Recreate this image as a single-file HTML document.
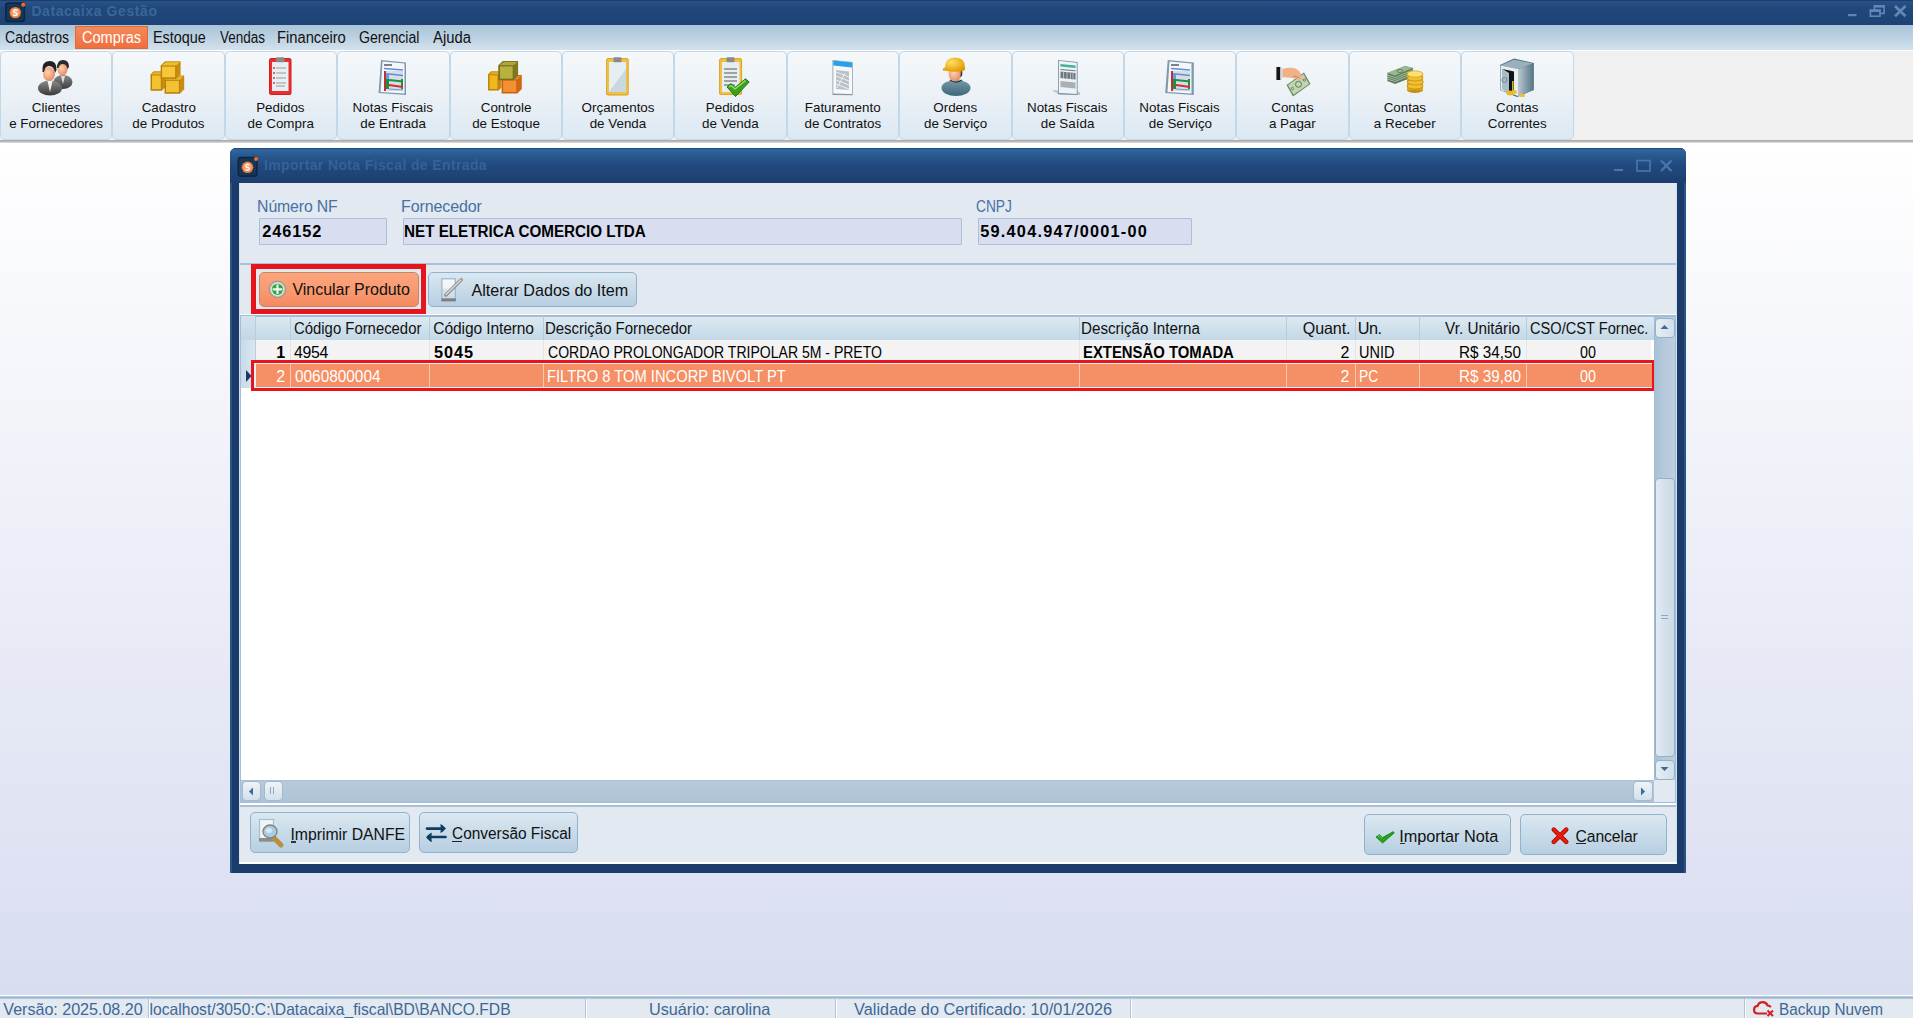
<!DOCTYPE html>
<html><head><meta charset="utf-8"><title>Datacaixa Gestão</title><style>
*{box-sizing:border-box}
html,body{margin:0;padding:0}
body{width:1913px;height:1018px;overflow:hidden;position:relative;font-family:"Liberation Sans",sans-serif;background:#fff}
.t{position:absolute;white-space:nowrap;line-height:20px;font-family:"Liberation Sans",sans-serif}
.a{position:absolute}
#title{left:0;top:0;width:1913px;height:25px;background:linear-gradient(#1d3d68 0,#1d3d68 1px,#2a5288 1px,#27508a 3px,#204879 8px,#1f4679 60%,#1d4376)}
#menu{left:0;top:25px;width:1913px;height:25px;background:linear-gradient(#abc4d9,#bcd1e2 50%,#d3e1ec)}
#compras{left:75px;top:25.5px;width:72.5px;height:23px;background:linear-gradient(#f5895a,#ee6f3f);border:1px solid #e06a38}
#ribbon{left:0;top:50px;width:1913px;height:90px;background:#f0f0f0;border-top:1px solid #fff}
.rb{position:absolute;top:51px;width:112.4px;height:88.5px;border:1px solid #c2d8e8;border-width:1px 1.2px;border-radius:5px;background:linear-gradient(#f5f8fa,#ebf1f6 50%,#dce8f2)}
.ic{position:absolute;top:57px}
#rline{left:0;top:140px;width:1913px;height:3px;background:linear-gradient(#a4a4a4,#bcbcbc 50%,#e4e4e4)}
#main{left:0;top:143px;width:1913px;height:852px;background:linear-gradient(#ffffff,#d8ddf0)}
#dlg{left:230px;top:148px;width:1456px;height:725px;background:#1b3c6b;border-radius:6px 6px 1px 1px;box-shadow:inset 2px 0 0 #285486,inset -2px 0 0 #285486}
#dtitle{left:230px;top:148px;width:1456px;height:35px;border-radius:6px 6px 0 0;background:linear-gradient(#1d3f6c,#3068a0 5%,#2a5b91 18%,#22497e 50%,#1c3e6e)}
#dcont{left:239px;top:183px;width:1438px;height:681px;background:#e2e9f1;border-left:1px solid #d0e0ec;border-right:1px solid #d0e0ec;border-bottom:2px solid #fff}
.edit{position:absolute;background:#d8deef;border:1px solid #a8c1d8;border-radius:1px}
.sep{position:absolute;height:2px;background:#a9c1d7}
.btn{position:absolute;border:1px solid #8fb2cf;border-radius:5px;background:linear-gradient(#dbe8f1,#c8dbe9 50%,#b7cfe2)}
#grid{left:240px;top:315px;width:1436px;height:488px;background:#fff;border:1px solid #a3bed4;border-top-width:2px}
#ghead{left:241px;top:317px;width:1413px;height:23px;background:linear-gradient(#dde9f2,#cddfeb 60%,#c3d7e6)}
#gind{left:241px;top:340px;width:15px;height:48px;background:linear-gradient(90deg,#c8dbe8,#dbe7f0)}
.vl{position:absolute;width:1px}
#vsb{left:1654px;top:317px;width:21px;height:463px;background:linear-gradient(90deg,#a9c1d6,#b6cadb 50%,#bccfdf);border-left:1px solid #a3bcd2}
.sbb{position:absolute;border:1px solid #9fbad2;border-radius:4px;background:linear-gradient(#eef3f7,#d3e1ec)}
#hsb{left:241px;top:780px;width:1413px;height:22px;background:linear-gradient(#b7cadb,#adc3d6);border-top:1px solid #a9c1d6}
#corner{left:1654px;top:780px;width:21px;height:22px;background:#e2e9f1}
#status{left:0;top:995px;width:1913px;height:23px;background:#e2e9f1;border-top:1px solid #fff}
#sline{left:0;top:996px;width:1913px;height:3px;background:linear-gradient(#b8cde0,#a0bad3 50%,#b8cde0)}
.sdiv{position:absolute;top:999px;width:2px;height:19px;border-left:1px solid #b0c4d6;border-right:1px solid #fff}
.red{position:absolute;border:5px solid #e8141c}
</style></head><body>
<div class="a" id="title"></div>
<svg class="a" style="left:4px;top:0px" width="24" height="24" viewBox="0 0 24 24">
<rect x="1.8" y="3" width="18.6" height="18.4" rx="2.5" fill="#163658" stroke="#0c2742" stroke-width="1.6"/>
<circle cx="11.3" cy="12.6" r="5.7" fill="#f07d3c"/><circle cx="11.3" cy="12.6" r="4" fill="#ffc8a0" opacity="0.5"/><path d="M13.3 10.3 Q11.5 9 9.8 10.3 Q9.2 12 11.3 12.6 Q13.4 13.2 12.8 14.9 Q11 16.2 9.2 14.8" fill="none" stroke="#fff4ea" stroke-width="1.5"/>
<circle cx="19.2" cy="4.8" r="2" fill="#ff6a18"/></svg>
<svg class="a" style="left:1845px;top:3px" width="64" height="16" viewBox="0 0 64 16">
<rect x="3" y="11" width="8.5" height="2.2" fill="#5a84b2"/>
<rect x="29.5" y="2.8" width="9.6" height="7.6" fill="none" stroke="#5f88b5" stroke-width="1.6"/><rect x="28.7" y="2" width="11.2" height="2.6" fill="#5f88b5"/>
<rect x="25.4" y="7.2" width="9.6" height="6" fill="#1f4578" stroke="#5f88b5" stroke-width="1.6"/><rect x="24.6" y="6.4" width="11.2" height="2.6" fill="#5f88b5"/>
<path d="M50 3 L60.5 13.2 M60.5 3 L50 13.2" stroke="#5f88b5" stroke-width="2.8"/></svg>
<div class="a" id="menu"></div>
<div class="a" id="compras"></div>
<div class="a" id="ribbon"></div>
<div class="rb" style="left:0.0px"></div>
<svg class="ic" style="left:36.2px" width="40" height="40" viewBox="0 0 40 40">
<defs><radialGradient id="face" cx="0.4" cy="0.4" r="0.7"><stop offset="0" stop-color="#ffd2b0"/><stop offset="1" stop-color="#e0845a"/></radialGradient>
<linearGradient id="suit" x1="0" y1="0" x2="0" y2="1"><stop offset="0" stop-color="#8a8a8a"/><stop offset="1" stop-color="#3a3a3a"/></linearGradient></defs>
<ellipse cx="27" cy="25" rx="9.5" ry="7" fill="url(#suit)"/>
<path d="M25 19 l2 8 l2 -8z" fill="#ddd"/>
<ellipse cx="26.5" cy="12.5" rx="5" ry="6" fill="url(#face)"/>
<path d="M21 11 q0 -8 6 -8 q6 0 6 7 l-1.5 2 q-1 -5 -5 -5 q-3 0 -4 4z" fill="#2a2a2a"/>
<ellipse cx="14" cy="31" rx="12" ry="7.5" fill="url(#suit)"/>
<path d="M11.5 24 l2.5 11 l2.5 -11z" fill="#f2f2f2"/>
<ellipse cx="13" cy="17" rx="6" ry="7" fill="url(#face)"/>
<path d="M6.5 15 q-1 -11 7 -11 q7.5 0 7 9 l-1.5 3 q-1 -7 -6 -7 q-4 0 -5 6z" fill="#222"/>
</svg>
<div class="rb" style="left:112.4px"></div>
<svg class="ic" style="left:148.6px" width="40" height="40" viewBox="0 0 40 40"><path d="M1.5 17.490000000000002 L4.6899999999999995 14.3 L16.0 14.3 L16.0 30.51 L12.81 33.7 L1.5 33.7z" fill="#c88c10"/><rect x="2.5" y="17.990000000000002" width="9.81" height="14.709999999999997" fill="#f2c233" stroke="#b87e0a" stroke-width="1"/><path d="M2.5 17.490000000000002 L5.6899999999999995 15.3 L15.0 15.3 L12.81 17.490000000000002z" fill="#f2c233" opacity="0.8"/><path d="M15.5 22.733999999999998 L19.834 18.4 L35.2 18.4 L35.2 32.366 L30.866000000000003 36.7 L15.5 36.7z" fill="#c88c10"/><rect x="16.5" y="23.233999999999998" width="13.866" height="12.466000000000001" fill="#f2c233" stroke="#b87e0a" stroke-width="1"/><path d="M16.5 22.733999999999998 L20.834 19.4 L34.2 19.4 L30.866000000000003 22.733999999999998z" fill="#f2c233" opacity="0.8"/><path d="M11.6 8.600000000000001 L16.0 4.2 L31.6 4.2 L31.6 17.5 L27.200000000000003 21.9 L11.6 21.9z" fill="#c88c10"/><rect x="12.6" y="9.100000000000001" width="14.1" height="11.799999999999999" fill="#f5c83a" stroke="#b87e0a" stroke-width="1"/><path d="M12.6 8.600000000000001 L17.0 5.2 L30.6 5.2 L27.200000000000003 8.600000000000001z" fill="#f5c83a" opacity="0.8"/></svg>
<div class="rb" style="left:224.8px"></div>
<svg class="ic" style="left:261.0px" width="40" height="40" viewBox="0 0 40 40">
<rect x="8" y="1" width="22.5" height="37" rx="2.5" fill="#d41c1c"/>
<rect x="9" y="2" width="20.5" height="35" rx="2" fill="#e83030"/>
<rect x="11" y="5" width="16.5" height="29" fill="#e8eef2"/>
<rect x="15" y="0.3" width="8.5" height="5" rx="1" fill="#8a8a8a"/>
<circle cx="13" cy="11" r="0.9" fill="#d22"/><circle cx="13" cy="16" r="0.9" fill="#d22"/><circle cx="13" cy="21" r="0.9" fill="#d22"/><circle cx="13" cy="26" r="0.9" fill="#d22"/>
<path d="M15 11h10M15 16h10M15 21h10M15 26h10M15 29h9" stroke="#999" stroke-width="1.2"/>
</svg>
<div class="rb" style="left:337.2px"></div>
<svg class="ic" style="left:373.4px" width="40" height="40" viewBox="0 0 40 40">
<path d="M5.5 36 L8 3 L33 5.5 L33 38z" fill="#7f98ac"/>
<path d="M7.5 35 L9.5 4.5 L31.5 6.5 L31.5 36.5z" fill="#f4f6f8"/>
<path d="M11 8 h8" stroke="#333" stroke-width="1.2"/>
<path d="M11 11.5 L30 13" stroke="#5b8ee0" stroke-width="1.5"/>
<rect x="11" y="14" width="19" height="20" fill="#d8dde4"/>
<rect x="11" y="14" width="2" height="20" fill="#c03030"/>
<rect x="13" y="16" width="3" height="6" fill="#6a9ae6"/>
<rect x="13" y="22" width="3" height="10" fill="#1e9040"/>
<path d="M16 17 L30 18.5" stroke="#5b8ee0" stroke-width="1.5"/>
<path d="M16 23 L30 24.5" stroke="#1e9040" stroke-width="2"/>
<rect x="28" y="22" width="2" height="10" fill="#1e9040"/>
<path d="M16 28 L30 30" stroke="#d03030" stroke-width="2"/>
<path d="M16 32 L30 33" stroke="#6a9ae6" stroke-width="1.2"/>
</svg>
<div class="rb" style="left:449.6px"></div>
<svg class="ic" style="left:485.8px" width="40" height="40" viewBox="0 0 40 40"><path d="M2 17.27 L4.970000000000001 14.3 L15.5 14.3 L15.5 30.630000000000003 L12.53 33.6 L2 33.6z" fill="#c88a10"/><rect x="3" y="17.77" width="9.03" height="14.830000000000002" fill="#f0b820" stroke="#b8800a" stroke-width="1"/><path d="M3 17.27 L5.970000000000001 15.3 L14.5 15.3 L12.53 17.27z" fill="#f0b820" opacity="0.8"/><path d="M15.6 22.444 L20.044 18 L35.8 18 L35.8 31.956 L31.355999999999998 36.4 L15.6 36.4z" fill="#d06810"/><rect x="16.6" y="22.944" width="14.256" height="12.456" fill="#f59030" stroke="#c06010" stroke-width="1"/><path d="M16.6 22.444 L21.044 19 L34.8 19 L31.355999999999998 22.444z" fill="#f59030" opacity="0.8"/><path d="M12.3 8.356 L16.656 4 L32.1 4 L32.1 18.844 L27.744 23.2 L12.3 23.2z" fill="#807820"/><rect x="13.3" y="8.856" width="13.944" height="13.344" fill="#b8b040" stroke="#6e6818" stroke-width="1"/><path d="M13.3 8.356 L17.656 5 L31.1 5 L27.744 8.356z" fill="#b8b040" opacity="0.8"/></svg>
<div class="rb" style="left:562.0px"></div>
<svg class="ic" style="left:598.2px" width="40" height="40" viewBox="0 0 40 40">
<rect x="8.1" y="1" width="22.6" height="37.5" rx="2.5" fill="#d8a020"/>
<rect x="9" y="1.8" width="20.8" height="35.8" rx="2" fill="#f0c040"/>
<rect x="11" y="5" width="17" height="30" fill="#e6eef2"/>
<path d="M11 35 L28 12 L28 35z" fill="#c8d8e0"/>
<rect x="15.5" y="0.3" width="8" height="5" rx="1" fill="#8a8a8a"/>
</svg>
<div class="rb" style="left:674.4px"></div>
<svg class="ic" style="left:710.6px" width="40" height="40" viewBox="0 0 40 40">
<rect x="8.1" y="1" width="23" height="37" rx="2.5" fill="#d8a020"/>
<rect x="9" y="1.8" width="21.2" height="35.4" rx="2" fill="#f0c040"/>
<rect x="11" y="5" width="17.5" height="30" fill="#e6eef2"/>
<path d="M13 12h13M13 16h13M13 20h13M13 24h13M13 28h11" stroke="#888" stroke-width="1.3"/>
<rect x="15.5" y="0.3" width="8" height="5" rx="1" fill="#8a8a8a"/>
<path d="M16 30 L20 26.5 L24 30.5 L34.5 21.8 L38.2 25 L24.5 39.5z" fill="#3aa020" stroke="#1e7a10" stroke-width="1"/>
<path d="M18 30 L20 28.5 L24 32 L34.5 23.5" stroke="#a8e070" stroke-width="1.2" fill="none"/>
</svg>
<div class="rb" style="left:786.8px"></div>
<svg class="ic" style="left:823.0px" width="40" height="40" viewBox="0 0 40 40">
<path d="M9.5 38 L9.5 3 L29.7 5 L29.7 38.3z" fill="#8a9aa8"/>
<path d="M10.3 36.5 L10.3 3.6 L29 5.6 L29 37z" fill="#f8f8fa"/>
<path d="M10.3 3.6 L29 5.6 L29 10.5 L10.3 8.5z" fill="#2aa0e8"/>
<path d="M13 13 L26 14.5 L26 33 L13 32z" fill="#b8c0c8"/>
<path d="M13 15 L26 20 M13 19 L26 24 M13 23 L26 28 M13 27 L26 32 M14 31 L22 16" stroke="#f0f0f0" stroke-width="1"/>
</svg>
<div class="rb" style="left:899.2px"></div>
<svg class="ic" style="left:935.4px" width="40" height="40" viewBox="0 0 40 40">
<defs><linearGradient id="shirt" x1="0" y1="0" x2="0" y2="1"><stop offset="0" stop-color="#7a98a8"/><stop offset="1" stop-color="#3a6878"/></linearGradient>
<radialGradient id="helm" cx="0.4" cy="0.35" r="0.7"><stop offset="0" stop-color="#ffe060"/><stop offset="1" stop-color="#e09800"/></radialGradient></defs>
<ellipse cx="21" cy="31" rx="14.5" ry="8" fill="url(#shirt)"/>
<path d="M15 23 q6 4 12 0" stroke="#1a3a48" stroke-width="1.5" fill="none"/>
<ellipse cx="20" cy="17" rx="6.5" ry="7.5" fill="url(#face)"/>
<path d="M26 12 q2 2 1 7 l-1.5 1z" fill="#333"/>
<path d="M8 13.5 q-1 -2 2 -3 q0 -10 10 -10 q10 0 10 10 q1 2 -2 3.5 q-10 1.5 -20 -0.5z" fill="url(#helm)"/>
</svg>
<div class="rb" style="left:1011.6px"></div>
<svg class="ic" style="left:1047.8px" width="40" height="40" viewBox="0 0 40 40">
<path d="M4 33 L11.5 38 L32 38 L32 35z" fill="#9aa" opacity="0.6"/>
<path d="M10 3 L29.6 5 L29.6 38 L10 37z" fill="#6f8ca0"/>
<path d="M10.8 3.8 L28.8 5.7 L28.8 37 L10.8 36z" fill="#eef2f4"/>
<path d="M12.5 7 L27.5 8.5 L27.5 11 L12.5 9.5z" fill="#40b0a0"/>
<path d="M12.5 12.5 L27.5 13.8" stroke="#555" stroke-width="0.8"/>
<path d="M12.5 14.5 L27.5 16 L27.5 22.5 L12.5 21z" fill="#6a7a80"/>
<path d="M15.5 15 v7 M19 15 v7 M22.5 15.5 v7 M25 16 v7" stroke="#c8d0d4" stroke-width="0.8"/>
<path d="M12.5 24 L27.5 25.5 L27.5 31.5 L12.5 30z" fill="#a8b0b4"/>
</svg>
<div class="rb" style="left:1124.0px"></div>
<svg class="ic" style="left:1160.2px" width="40" height="40" viewBox="0 0 40 40">
<path d="M5.2 36 L7.7 3 L33.8 5.5 L33.8 38z" fill="#7f98ac"/>
<path d="M7.5 35 L9.5 4.5 L31.5 6.5 L31.5 36.5z" fill="#f4f6f8"/>
<path d="M11 8 h8" stroke="#333" stroke-width="1.2"/>
<path d="M11 11.5 L30 13" stroke="#5b8ee0" stroke-width="1.5"/>
<rect x="11" y="14" width="19" height="20" fill="#d8dde4"/>
<rect x="11" y="14" width="2" height="20" fill="#c03030"/>
<rect x="13" y="16" width="3" height="6" fill="#6a9ae6"/>
<rect x="13" y="22" width="3" height="10" fill="#1e9040"/>
<path d="M16 17 L30 18.5" stroke="#5b8ee0" stroke-width="1.5"/>
<path d="M16 23 L30 24.5" stroke="#1e9040" stroke-width="2"/>
<rect x="28" y="22" width="2" height="10" fill="#1e9040"/>
<path d="M16 28 L30 30" stroke="#d03030" stroke-width="2"/>
<path d="M16 32 L30 33" stroke="#6a9ae6" stroke-width="1.2"/>
</svg>
<div class="rb" style="left:1236.4px"></div>
<svg class="ic" style="left:1272.6px" width="40" height="40" viewBox="0 0 40 40">
<path d="M13.5 28 L31 15.5 L37.5 27 L20 39.5z" fill="#6a8a60"/>
<path d="M15 28 L30.5 17 L36 27 L20.5 37.8z" fill="#c0d6b0"/>
<circle cx="25.5" cy="27.3" r="3" fill="none" stroke="#5a7a50" stroke-width="1"/>
<circle cx="19.5" cy="31.5" r="1.2" fill="none" stroke="#5a7a50" stroke-width="0.8"/>
<circle cx="31.5" cy="23" r="1.2" fill="none" stroke="#5a7a50" stroke-width="0.8"/>
<rect x="3.4" y="10" width="4" height="13" fill="#151515"/>
<rect x="7.4" y="11" width="2" height="11" fill="#d8d8d8"/>
<path d="M9.4 12 q6 -2 11 -1 q5 1 7 5 l2 5 q0.5 3 -2 3 l-3 -3 q-2 1 -5 0 l-10 -1z" fill="#f0b088"/>
<path d="M20 19 q4 0 6 2" stroke="#c07850" stroke-width="0.8" fill="none"/>
</svg>
<div class="rb" style="left:1348.8px"></div>
<svg class="ic" style="left:1385.0px" width="40" height="40" viewBox="0 0 40 40">
<path d="M2.4 16 L20 9 L28 11 L28 20 L10 27 L2.4 24z" fill="#5a7a58"/>
<path d="M2.4 16 L20 9 L28 11 L10 18.5z" fill="#98b890"/>
<path d="M2.4 18 L10 20.5 L28 13 M2.4 20 L10 22.5 L28 15 M2.4 22 L10 24.5 L28 17" stroke="#c8dcc0" stroke-width="0.7" fill="none"/>
<ellipse cx="15" cy="14" rx="3" ry="1.6" fill="none" stroke="#5a7a58" stroke-width="0.8"/>
<ellipse cx="30" cy="33" rx="8" ry="3" fill="#c89010"/>
<rect x="22" y="17" width="16" height="16" fill="#e0a818"/>
<ellipse cx="30" cy="29" rx="8" ry="3" fill="#f0c030" stroke="#b88008" stroke-width="0.6"/>
<ellipse cx="30.5" cy="25" rx="8" ry="3" fill="#f0c030" stroke="#b88008" stroke-width="0.6"/>
<ellipse cx="30" cy="21" rx="8" ry="3" fill="#f0c030" stroke="#b88008" stroke-width="0.6"/>
<ellipse cx="30" cy="17" rx="8" ry="3.2" fill="#ffe070" stroke="#c89010" stroke-width="0.6"/>
</svg>
<div class="rb" style="left:1461.2px"></div>
<svg class="ic" style="left:1497.4px" width="40" height="40" viewBox="0 0 40 40">
<defs><linearGradient id="safe" x1="0" y1="0" x2="1" y2="0"><stop offset="0" stop-color="#b8c8d0"/><stop offset="1" stop-color="#5a7888"/></linearGradient></defs>
<path d="M3 8 L17 1.5 L36.8 6 L36.8 33 L20 40 L3 33z" fill="#4a6878"/>
<path d="M3.5 8.5 L17 2.5 L36 6.5 L21 12z" fill="#9ab0bc"/>
<path d="M21 12 L36 6.5 L36 33 L21 39z" fill="url(#safe)"/>
<path d="M3.5 8.5 L21 12 L21 39 L3.5 33z" fill="#e8eef0"/>
<path d="M5.5 12 L17 14.5 L17 36 L5.5 31z" fill="#0a1418"/>
<path d="M5 11.5 L12 16 L12 37 L5 32z" fill="#a8bcc6"/>
<circle cx="7.5" cy="23" r="2.5" fill="none" stroke="#6a8898" stroke-width="1"/>
<rect x="15" y="24" width="1.6" height="10" fill="#d8b020"/>
<ellipse cx="13" cy="36" rx="3.5" ry="2.5" fill="#e8b820"/><ellipse cx="17.5" cy="35" rx="2.5" ry="2" fill="#f0c030"/><ellipse cx="25" cy="38.5" rx="3" ry="1.8" fill="#f0c030"/>
</svg>
<div class="a" id="rline"></div>
<div class="a" id="main"></div>

<div class="a" id="dlg"></div>
<div class="a" id="dtitle"></div>
<svg class="a" style="left:236px;top:155px" width="24" height="24" viewBox="0 0 24 24">
<rect x="2.3" y="2.5" width="18.6" height="18.6" rx="2.5" fill="#163658" stroke="#0c2742" stroke-width="1.6"/>
<circle cx="11.5" cy="12.3" r="5.8" fill="#f07d3c"/><circle cx="11.5" cy="12.3" r="4" fill="#ffc8a0" opacity="0.5"/><path d="M13.5 10 Q11.7 8.7 10 10 Q9.4 11.7 11.5 12.3 Q13.6 12.9 13 14.6 Q11.2 15.9 9.4 14.5" fill="none" stroke="#fff4ea" stroke-width="1.5"/>
<circle cx="20" cy="4" r="2" fill="#ff6a18"/></svg>
<svg class="a" style="left:1610px;top:158px" width="64" height="16" viewBox="0 0 64 16">
<rect x="4" y="11" width="9" height="2" fill="#4a78a8"/>
<rect x="27" y="2.5" width="13" height="10.5" fill="none" stroke="#4a78a8" stroke-width="1.6"/>
<path d="M51 2.5 L61.5 13 M61.5 2.5 L51 13" stroke="#4a78a8" stroke-width="2.2"/></svg>
<div class="a" id="dcont"></div>
<div class="edit" style="left:258.8px;top:218.2px;width:128.2px;height:26.8px"></div>
<div class="edit" style="left:402.7px;top:218.3px;width:559.3px;height:26.3px"></div>
<div class="edit" style="left:977.6px;top:218.3px;width:214.6px;height:26.3px"></div>
<div class="sep" style="left:240px;top:263px;width:1436px"></div>

<div class="btn" style="left:259px;top:272px;width:160px;height:34.5px;border-color:#c4876a;background:linear-gradient(#fca47c,#f99b72 50%,#f48a5f)"></div>
<svg class="a" style="left:268px;top:280px" width="19" height="19" viewBox="0 0 19 19">
<circle cx="9.5" cy="9.3" r="8.2" fill="#c4c8c4" stroke="#8a8e8a" stroke-width="0.9"/><circle cx="9.5" cy="9.3" r="6.6" fill="#e6e8e6"/><circle cx="9.5" cy="9.3" r="5.6" fill="#2ea83a"/>
<path d="M9.5 4.5v9.6M4.7 9.3h9.6" stroke="#f4f4f4" stroke-width="2.2"/></svg>
<div class="red" style="left:251px;top:264px;width:175px;height:50px"></div>
<div class="btn" style="left:428px;top:272px;width:209px;height:34.5px"></div>
<svg class="a" style="left:439px;top:276px" width="26" height="26" viewBox="0 0 26 26">
<defs><linearGradient id="pad" x1="0" y1="0" x2="0" y2="1"><stop offset="0" stop-color="#f4f9fd"/><stop offset="0.45" stop-color="#eef5fa"/><stop offset="0.5" stop-color="#d8e4ec"/><stop offset="1" stop-color="#ccdae4"/></linearGradient></defs>
<rect x="2.9" y="2.8" width="13.4" height="20.4" fill="url(#pad)" stroke="#98b6ce" stroke-width="1.2"/>
<rect x="2.3" y="22.4" width="14.6" height="3" fill="#7c8086"/>
<path d="M6.8 19 L22.3 3.8" stroke="#8e8e8e" stroke-width="3.4" stroke-linecap="round"/>
<path d="M7 18.6 L22 4" stroke="#dcdcdc" stroke-width="1.4" stroke-linecap="round"/></svg>

<div class="a" style="left:240px;top:314px;width:1436px;height:1px;background:#fff"></div>
<div class="a" id="grid"></div>
<div class="a" id="ghead"></div>
<div class="a" style="left:256px;top:340px;width:1395px;height:24px;background:#f3f3f3"></div>
<div class="a" id="gind"></div>
<div class="a" style="left:241px;top:316px;width:15px;height:24px;background:linear-gradient(#d5e3ee,#c3d6e5)"></div>
<!-- column lines header -->
<div class="vl" style="left:255px;top:316px;height:72px;background:#b7ccdd"></div>
<div class="vl" style="left:290px;top:316px;height:24px;background:#b7ccdd"></div>
<div class="vl" style="left:429px;top:316px;height:24px;background:#b7ccdd"></div>
<div class="vl" style="left:543px;top:316px;height:24px;background:#b7ccdd"></div>
<div class="vl" style="left:1079px;top:316px;height:24px;background:#b7ccdd"></div>
<div class="vl" style="left:1286px;top:316px;height:24px;background:#b7ccdd"></div>
<div class="vl" style="left:1355px;top:316px;height:24px;background:#b7ccdd"></div>
<div class="vl" style="left:1419px;top:316px;height:24px;background:#b7ccdd"></div>
<div class="vl" style="left:1526px;top:316px;height:24px;background:#b7ccdd"></div>
<!-- row lines -->
<div class="vl" style="left:290px;top:340px;height:24px;background:#e0e6ec"></div>
<div class="vl" style="left:429px;top:340px;height:24px;background:#e0e6ec"></div>
<div class="vl" style="left:543px;top:340px;height:24px;background:#e0e6ec"></div>
<div class="vl" style="left:1079px;top:340px;height:24px;background:#e0e6ec"></div>
<div class="vl" style="left:1286px;top:340px;height:24px;background:#e0e6ec"></div>
<div class="vl" style="left:1355px;top:340px;height:24px;background:#e0e6ec"></div>
<div class="vl" style="left:1419px;top:340px;height:24px;background:#e0e6ec"></div>
<div class="vl" style="left:1526px;top:340px;height:24px;background:#e0e6ec"></div>
<!-- selected row -->
<div class="a" style="left:254px;top:363px;width:1398px;height:25px;background:#e6f0f6"></div>
<div class="a" style="left:256px;top:364px;width:1396px;height:23px;background:#f58f65"></div>
<div class="vl" style="left:290px;top:364px;height:23px;background:#f9c8b0"></div>
<div class="vl" style="left:429px;top:364px;height:23px;background:#f9c8b0"></div>
<div class="vl" style="left:543px;top:364px;height:23px;background:#f9c8b0"></div>
<div class="vl" style="left:1079px;top:364px;height:23px;background:#f9c8b0"></div>
<div class="vl" style="left:1286px;top:364px;height:23px;background:#f9c8b0"></div>
<div class="vl" style="left:1355px;top:364px;height:23px;background:#f9c8b0"></div>
<div class="vl" style="left:1419px;top:364px;height:23px;background:#f9c8b0"></div>
<div class="vl" style="left:1526px;top:364px;height:23px;background:#f9c8b0"></div>
<svg class="a" style="left:245px;top:369px" width="8" height="14" viewBox="0 0 8 14"><path d="M1 1 L6.5 7 L1 13z" fill="#173a66"/></svg>
<div class="red" style="left:251px;top:360px;width:1404px;height:31px;border-width:3px"></div>
<!-- scrollbars -->
<div class="a" id="vsb"></div>
<div class="sbb" style="left:1654.5px;top:317.5px;width:20.5px;height:20px;border-color:#92b2cc;background:linear-gradient(90deg,#e6edf4,#d2dfe9)"></div>
<svg class="a" style="left:1659px;top:323px" width="11" height="8" viewBox="0 0 11 8"><path d="M1.5 6 L5.5 2 L9.5 6z" fill="#3a6a9a"/></svg>
<div class="sbb" style="left:1654.5px;top:478px;width:20.5px;height:279px;background:linear-gradient(90deg,#e3eaf3,#d4e0ea 50%,#cddbe7);border-color:#92b2cc"></div>
<div class="a" style="left:1661px;top:615px;width:7px;height:1px;background:#8aa8c2"></div>
<div class="a" style="left:1661px;top:618px;width:7px;height:1px;background:#8aa8c2"></div>
<div class="sbb" style="left:1654.5px;top:759.5px;width:20.5px;height:20px;border-color:#92b2cc;background:linear-gradient(90deg,#e6edf4,#d2dfe9)"></div>
<svg class="a" style="left:1659px;top:765px" width="11" height="8" viewBox="0 0 11 8"><path d="M1.5 2 L5.5 6 L9.5 2z" fill="#3a6a9a"/></svg>
<div class="a" id="hsb"></div>
<div class="sbb" style="left:242.4px;top:781px;width:18.6px;height:20px"></div>
<svg class="a" style="left:247px;top:786px" width="8" height="11" viewBox="0 0 8 11"><path d="M6 1.5 L2 5.5 L6 9.5z" fill="#3a6a9a"/></svg>
<div class="sbb" style="left:263.5px;top:781px;width:19.2px;height:20px"></div>
<div class="a" style="left:270px;top:787px;width:1px;height:7px;background:#8aa8c2"></div>
<div class="a" style="left:273px;top:787px;width:1px;height:7px;background:#8aa8c2"></div>
<div class="sbb" style="left:1633.3px;top:781px;width:19.5px;height:20px"></div>
<svg class="a" style="left:1639px;top:786px" width="8" height="11" viewBox="0 0 8 11"><path d="M2 1.5 L6 5.5 L2 9.5z" fill="#3a6a9a"/></svg>
<div class="a" id="corner"></div>
<div class="a" style="left:240px;top:803px;width:1436px;height:2px;background:#fff"></div><div class="sep" style="left:240px;top:805px;width:1436px;height:1.5px"></div>

<!-- bottom buttons -->
<div class="btn" style="left:250.3px;top:812px;width:159.7px;height:41px"></div>
<svg class="a" style="left:256px;top:816px" width="30" height="34" viewBox="0 0 30 34">
<rect x="3.5" y="3.5" width="14" height="22" fill="#eef4f8" stroke="#a4bed2" stroke-width="1.2"/>
<rect x="3" y="22" width="15" height="3.5" fill="#8c8c8c"/>
<path d="M17.5 21.5 L25 29" stroke="#b89040" stroke-width="5" stroke-linecap="round"/>
<ellipse cx="14" cy="15.5" rx="7" ry="6.5" fill="#a8cce8" stroke="#8a8070" stroke-width="1.3"/>
<ellipse cx="13" cy="14.5" rx="3" ry="2.5" fill="#e0f0ff" opacity="0.8"/></svg>
<div class="a" style="left:291px;top:841px;width:5px;height:1.5px;background:#333"></div>
<div class="btn" style="left:418.8px;top:812px;width:159.5px;height:41px"></div>
<svg class="a" style="left:424px;top:822px" width="24" height="22" viewBox="0 0 24 22">
<path d="M3 6.6 H19" stroke="#0f3d62" stroke-width="2.6" stroke-linecap="round"/><path d="M16.3 2.3 Q18 2.2 22 6.6 Q18 11 16.3 10.8 Q17.5 6.6 16.3 2.3z" fill="#0f3d62"/>
<path d="M21.5 15 H5.5" stroke="#0f3d62" stroke-width="2.6" stroke-linecap="round"/><path d="M7.8 10.8 Q6 11 2 15.2 Q6 20 7.8 20 Q6.8 15.2 7.8 10.8z" fill="#0f3d62"/></svg>
<div class="a" style="left:451.5px;top:840.5px;width:10px;height:1.5px;background:#222"></div>
<div class="btn" style="left:1364.2px;top:814.2px;width:146.8px;height:41px"></div>
<svg class="a" style="left:1374px;top:829px" width="22" height="16" viewBox="0 0 22 16">
<path d="M2 8 L5.5 5.6 L8.6 8.6 L19.3 2.6 L20.2 4 L8.6 14z" fill="#28a020" stroke="#138010" stroke-width="0.8" stroke-linejoin="round"/><path d="M4 7.6 L5.5 6.8 L8.2 9.6" stroke="#70d850" stroke-width="1" fill="none"/></svg>
<div class="a" style="left:1400px;top:842.5px;width:5px;height:1.5px;background:#333"></div>
<div class="btn" style="left:1520.3px;top:814.2px;width:146.7px;height:41px"></div>
<svg class="a" style="left:1550px;top:826px" width="20" height="19" viewBox="0 0 20 19">
<path d="M3.8 3.6 L16.2 15.9 M16.2 3.6 L3.8 15.9" stroke="#a80808" stroke-width="4.4" stroke-linecap="round"/><path d="M3.8 3.6 L16.2 15.9 M16.2 3.6 L3.8 15.9" stroke="#ee1a08" stroke-width="2.8" stroke-linecap="round"/></svg>
<div class="a" style="left:1575.5px;top:842.5px;width:10px;height:1.5px;background:#222"></div>

<!-- status bar -->
<div class="a" id="status"></div>
<div class="a" id="sline"></div>
<div class="sdiv" style="left:148px"></div>
<div class="sdiv" style="left:585px"></div>
<div class="sdiv" style="left:835px"></div>
<div class="sdiv" style="left:1130px"></div>
<div class="sdiv" style="left:1744px"></div>
<svg class="a" style="left:1752px;top:1001px" width="24" height="17" viewBox="0 0 24 17">
<path d="M15 12.5 H6 q-4 0 -4 -3.8 q0 -3.5 3.6 -3.8 q1.2 -3.7 5 -3.7 q3.8 0 5 3.3 q2.2 0 3.2 1.8" fill="none" stroke="#d42020" stroke-width="2.2"/>
<path d="M15.5 9.5 L21 15 M21 9.5 L15.5 15" stroke="#d42020" stroke-width="2"/></svg>

<div class="t" style="left:31.40px;top:1px;font-size:14px;color:#3a6797;font-weight:bold;letter-spacing:0.59px">Datacaixa Gestão</div>
<div class="t" style="left:4.80px;top:28px;font-size:16px;color:#111;transform:scaleX(0.878);transform-origin:0 0">Cadastros</div>
<div class="t" style="left:82.20px;top:28px;font-size:16px;color:#fff;transform:scaleX(0.909);transform-origin:0 0">Compras</div>
<div class="t" style="left:153.40px;top:28px;font-size:16px;color:#111;transform:scaleX(0.899);transform-origin:0 0">Estoque</div>
<div class="t" style="left:219.60px;top:28px;font-size:16px;color:#111;transform:scaleX(0.843);transform-origin:0 0">Vendas</div>
<div class="t" style="left:277.08px;top:28px;font-size:16px;color:#111;transform:scaleX(0.921);transform-origin:0 0">Financeiro</div>
<div class="t" style="left:359.30px;top:28px;font-size:16px;color:#111;transform:scaleX(0.883);transform-origin:0 0">Gerencial</div>
<div class="t" style="left:432.90px;top:28px;font-size:16px;color:#111;transform:scaleX(0.926);transform-origin:0 0">Ajuda</div>
<div class="t" style="left:31.86px;top:98px;font-size:13.4px;color:#111">Clientes</div>
<div class="t" style="left:9.15px;top:114px;font-size:13.4px;color:#111">e Fornecedores</div>
<div class="t" style="left:141.66px;top:98px;font-size:13.4px;color:#111">Cadastro</div>
<div class="t" style="left:132.34px;top:114px;font-size:13.4px;color:#111">de Produtos</div>
<div class="t" style="left:256.15px;top:98px;font-size:13.4px;color:#111">Pedidos</div>
<div class="t" style="left:247.60px;top:114px;font-size:13.4px;color:#111">de Compra</div>
<div class="t" style="left:352.57px;top:98px;font-size:13.4px;color:#111">Notas Fiscais</div>
<div class="t" style="left:360.37px;top:114px;font-size:13.4px;color:#111">de Entrada</div>
<div class="t" style="left:480.72px;top:98px;font-size:13.4px;color:#111">Controle</div>
<div class="t" style="left:472.15px;top:114px;font-size:13.4px;color:#111">de Estoque</div>
<div class="t" style="left:581.58px;top:98px;font-size:13.4px;color:#111">Orçamentos</div>
<div class="t" style="left:589.63px;top:114px;font-size:13.4px;color:#111">de Venda</div>
<div class="t" style="left:705.75px;top:98px;font-size:13.4px;color:#111">Pedidos</div>
<div class="t" style="left:702.03px;top:114px;font-size:13.4px;color:#111">de Venda</div>
<div class="t" style="left:804.76px;top:98px;font-size:13.4px;color:#111">Faturamento</div>
<div class="t" style="left:804.51px;top:114px;font-size:13.4px;color:#111">de Contratos</div>
<div class="t" style="left:933.29px;top:98px;font-size:13.4px;color:#111">Ordens</div>
<div class="t" style="left:923.99px;top:114px;font-size:13.4px;color:#111">de Serviço</div>
<div class="t" style="left:1026.97px;top:98px;font-size:13.4px;color:#111">Notas Fiscais</div>
<div class="t" style="left:1040.72px;top:114px;font-size:13.4px;color:#111">de Saída</div>
<div class="t" style="left:1139.37px;top:98px;font-size:13.4px;color:#111">Notas Fiscais</div>
<div class="t" style="left:1148.79px;top:114px;font-size:13.4px;color:#111">de Serviço</div>
<div class="t" style="left:1271.23px;top:98px;font-size:13.4px;color:#111">Contas</div>
<div class="t" style="left:1268.88px;top:114px;font-size:13.4px;color:#111">a Pagar</div>
<div class="t" style="left:1383.63px;top:98px;font-size:13.4px;color:#111">Contas</div>
<div class="t" style="left:1373.84px;top:114px;font-size:13.4px;color:#111">a Receber</div>
<div class="t" style="left:1496.03px;top:98px;font-size:13.4px;color:#111">Contas</div>
<div class="t" style="left:1487.85px;top:114px;font-size:13.4px;color:#111">Correntes</div>
<div class="t" style="left:263.90px;top:155px;font-size:14px;color:#33629a;font-weight:bold;letter-spacing:0.37px">Importar Nota Fiscal de Entrada</div>
<div class="t" style="left:257.10px;top:197px;font-size:15.82px;color:#4671a3;letter-spacing:-0.13px">Número NF</div>
<div class="t" style="left:401.00px;top:196px;font-size:16.03px;color:#4671a3;letter-spacing:-0.12px">Fornecedor</div>
<div class="t" style="left:976.20px;top:197px;font-size:16px;color:#4671a3;transform:scaleX(0.858);transform-origin:0 0">CNPJ</div>
<div class="t" style="left:262.20px;top:221px;font-size:16.3px;color:#000;font-weight:bold;letter-spacing:0.95px">246152</div>
<div class="t" style="left:403.55px;top:222px;font-size:16px;color:#000;font-weight:bold;transform:scaleX(0.951);transform-origin:0 0">NET ELETRICA COMERCIO LTDA</div>
<div class="t" style="left:980.30px;top:221px;font-size:16.3px;color:#000;font-weight:bold;letter-spacing:1.22px">59.404.947/0001-00</div>
<div class="t" style="left:292.50px;top:280px;font-size:16.01px;color:#111;letter-spacing:-0.04px">Vincular Produto</div>
<div class="t" style="left:471.40px;top:280px;font-size:16.17px;color:#111;letter-spacing:-0.02px">Alterar Dados do Item</div>
<div class="t" style="left:294.20px;top:319px;font-size:16px;color:#111;transform:scaleX(0.930);transform-origin:0 0">Código Fornecedor</div>
<div class="t" style="left:433.30px;top:319px;font-size:15.6px;color:#111;letter-spacing:-0.12px">Código Interno</div>
<div class="t" style="left:545.27px;top:319px;font-size:16px;color:#111;transform:scaleX(0.934);transform-origin:0 0">Descrição Fornecedor</div>
<div class="t" style="left:1081.25px;top:319px;font-size:16px;color:#111;transform:scaleX(0.948);transform-origin:0 0">Descrição Interna</div>
<div class="t" style="left:1302.80px;top:318px;font-size:16.07px;color:#111;letter-spacing:-0.11px">Quant.</div>
<div class="t" style="left:1357.80px;top:318px;font-size:16.3px;color:#111;letter-spacing:-0.51px">Un.</div>
<div class="t" style="left:1445.00px;top:319px;font-size:16px;color:#111;transform:scaleX(0.956);transform-origin:0 0">Vr. Unitário</div>
<div class="t" style="left:1530.30px;top:319px;font-size:16px;color:#111;transform:scaleX(0.913);transform-origin:0 0">CSO/CST Fornec.</div>
<div class="t" style="left:276.20px;top:343px;font-size:16px;color:#000;font-weight:bold">1</div>
<div class="t" style="left:294.10px;top:343px;font-size:15.84px;color:#000;letter-spacing:-0.30px">4954</div>
<div class="t" style="left:434.10px;top:342px;font-size:16.3px;color:#000;font-weight:bold;letter-spacing:0.95px">5045</div>
<div class="t" style="left:547.50px;top:343px;font-size:16px;color:#000;transform:scaleX(0.877);transform-origin:0 0">CORDAO PROLONGADOR TRIPOLAR 5M - PRETO</div>
<div class="t" style="left:1083.47px;top:343px;font-size:16px;color:#000;font-weight:bold;transform:scaleX(0.929);transform-origin:0 0">EXTENSÃO TOMADA</div>
<div class="t" style="left:1340.50px;top:343px;font-size:16px;color:#000">2</div>
<div class="t" style="left:1359.09px;top:343px;font-size:16px;color:#000;transform:scaleX(0.905);transform-origin:0 0">UNID</div>
<div class="t" style="left:1458.95px;top:343px;font-size:16px;color:#000;transform:scaleX(0.953);transform-origin:0 0">R$ 34,50</div>
<div class="t" style="left:1580.40px;top:343px;font-size:16px;color:#000;transform:scaleX(0.894);transform-origin:0 0">00</div>
<div class="t" style="left:276.20px;top:367px;font-size:16px;color:#fff">2</div>
<div class="t" style="left:295.40px;top:367px;font-size:16px;color:#fff;transform:scaleX(0.961);transform-origin:0 0">0060800004</div>
<div class="t" style="left:546.58px;top:367px;font-size:16px;color:#fff;transform:scaleX(0.920);transform-origin:0 0">FILTRO 8 TOM INCORP BIVOLT PT</div>
<div class="t" style="left:1340.50px;top:367px;font-size:16px;color:#fff">2</div>
<div class="t" style="left:1359.14px;top:367px;font-size:16px;color:#fff;transform:scaleX(0.861);transform-origin:0 0">PC</div>
<div class="t" style="left:1459.05px;top:367px;font-size:16px;color:#fff;transform:scaleX(0.953);transform-origin:0 0">R$ 39,80</div>
<div class="t" style="left:1580.40px;top:367px;font-size:16px;color:#fff;transform:scaleX(0.894);transform-origin:0 0">00</div>
<div class="t" style="left:290.50px;top:825px;font-size:15.8px;color:#111;letter-spacing:-0.03px">Imprimir DANFE</div>
<div class="t" style="left:451.80px;top:824px;font-size:16px;color:#111;transform:scaleX(0.964);transform-origin:0 0">Conversão Fiscal</div>
<div class="t" style="left:1399.20px;top:826px;font-size:16.3px;color:#111;letter-spacing:-0.04px">Importar Nota</div>
<div class="t" style="left:1575.50px;top:827px;font-size:15.74px;color:#111;letter-spacing:-0.10px">Cancelar</div>
<div class="t" style="left:3.30px;top:999px;font-size:16.14px;color:#3f6794;letter-spacing:-0.03px">Versão: 2025.08.20</div>
<div class="t" style="left:149.50px;top:1000px;font-size:15.66px;color:#3f6794">localhost/3050:C:\Datacaixa_fiscal\BD\BANCO.FDB</div>
<div class="t" style="left:649.10px;top:999px;font-size:16.27px;color:#3f6794;letter-spacing:-0.06px">Usuário: carolina</div>
<div class="t" style="left:854.10px;top:999px;font-size:16.3px;color:#3f6794;letter-spacing:0.01px">Validade do Certificado: 10/01/2026</div>
<div class="t" style="left:1778.74px;top:1000px;font-size:16px;color:#3f6794;transform:scaleX(0.958);transform-origin:0 0">Backup Nuvem</div>
</body></html>
